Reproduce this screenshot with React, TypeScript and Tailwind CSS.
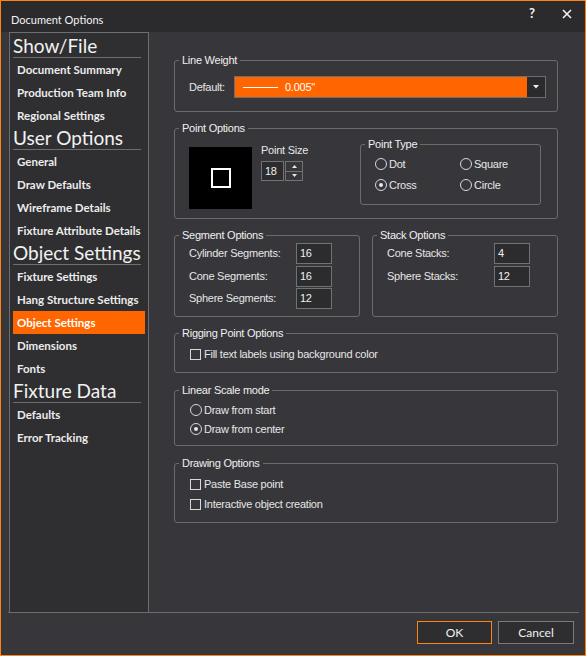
import React from 'react';

const sidebar: { header: string; items: string[] }[] = [
  { header: 'Show/File', items: ['Document Summary', 'Production Team Info', 'Regional Settings'] },
  { header: 'User Options', items: ['General', 'Draw Defaults', 'Wireframe Details', 'Fixture Attribute Details'] },
  { header: 'Object Settings', items: ['Fixture Settings', 'Hang Structure Settings', 'Object Settings', 'Dimensions', 'Fonts'] },
  { header: 'Fixture Data', items: ['Defaults', 'Error Tracking'] },
];

const SELECTED = 'Object Settings';

const Group: React.FC<{ title: string; className?: string; children?: React.ReactNode }> = ({ title, className, children }) => (
  <fieldset className={`border border-[#6b6b6b] rounded-[3px] ${className ?? ''}`}>
    <legend className="ml-[4px] px-[3px] leading-[14px] text-[#f0f0f0]">{title}</legend>
    {children}
  </fieldset>
);

const Radio: React.FC<{ label: string; checked?: boolean }> = ({ label, checked }) => (
  <div className="flex items-center h-[14px]">
    <span className="w-[12px] h-[12px] rounded-full border border-[#d8d8d8] flex items-center justify-center">
      {checked && <span className="w-[4px] h-[4px] rounded-full bg-[#e8e8e8]" />}
    </span>
    <span className="ml-[2px]">{label}</span>
  </div>
);

const Check: React.FC<{ label: string }> = ({ label }) => (
  <div className="flex items-center h-[14px]">
    <span className="w-[11px] h-[11px] border border-[#d8d8d8]" />
    <span className="ml-[3px]">{label}</span>
  </div>
);

const NumField: React.FC<{ label: string; value: string }> = ({ label, value }) => (
  <div className="flex items-center">
    <span className="w-[107px]">{label}</span>
    <div className="w-[36px] h-[21px] border border-[#727272] bg-[#2c2c2f] flex items-center pl-[3px] text-[#f0f0f0]">
      {value}
    </div>
  </div>
);

export default function App() {
  return (
    <div className="w-[586px] h-[656px] border border-[#ff8410] bg-[#37363b] flex flex-col overflow-hidden text-[11px] tracking-[-0.25px] text-[#e6e6e6] font-['Liberation_Sans',Arial,sans-serif]">
      {/* title bar */}
      <div className="h-[31px] shrink-0 bg-[#2b2b2e] flex items-start font-['Lato','Noto_Sans',sans-serif] tracking-normal">
        <span className="mt-[11px] ml-[10px] text-[11px] leading-[15px] text-[#f2f2f2]">Document Options</span>
        <div className="ml-auto mr-[13px] mt-[4px] flex items-center gap-[27px] text-[#f2f2f2]">
          <span className="text-[13px] font-bold leading-[16px]">?</span>
          <svg width="10" height="10" viewBox="0 0 10 10" className="mt-[1px]">
            <path d="M1 1 L9 9 M9 1 L1 9" stroke="#f2f2f2" strokeWidth="1.6" />
          </svg>
        </div>
      </div>

      {/* main area */}
      <div className="h-[581px] shrink-0 ml-[7px] mr-[6px] border-b border-[#6e6e6e] flex">
        <nav className="ml-[1px] w-[140px] border-l border-t border-r border-[#6e6e6e] bg-[#2f2f31] px-[3px] pt-[2px] font-['Lato','Noto_Sans',sans-serif] tracking-normal">
          {sidebar.map((sec) => (
            <div key={sec.header}>
              <div className="h-[23px] mr-[4px] border-b border-[#6e6e6e] flex items-end whitespace-nowrap text-[19px] leading-[22px] text-[#f2f2f2]">
                {sec.header}
              </div>
              {sec.items.map((item) => (
                <div
                  key={item}
                  className={`h-[23px] flex items-center pl-[4px] whitespace-nowrap text-[11.5px] font-bold ${
                    item === SELECTED ? 'bg-[#ff6600] text-white' : 'text-[#ececec]'
                  }`}
                >
                  {item}
                </div>
              ))}
            </div>
          ))}
        </nav>

        <div className="ml-[25px] w-[384px] pt-[21px] flex flex-col">
          <Group title="Line Weight" className="h-[59px]">
            <div className="flex items-center mt-[9px] pl-[14px]">
              <span className="w-[45px]">Default:</span>
              <div className="w-[312px] h-[22px] border border-[#6e6e6e] flex">
                <div className="flex-1 bg-[#ff6600] flex items-center pl-[8px] text-white">
                  <span className="w-[35px] h-px bg-white" />
                  <span className="ml-[7px]">0.005''</span>
                </div>
                <div className="w-[18px] bg-[#2b2b2e] flex items-center justify-center">
                  <svg width="6" height="4" viewBox="0 0 6 4">
                    <polygon points="0,0 6,0 3,3.5" fill="#f0f0f0" />
                  </svg>
                </div>
              </div>
            </div>
          </Group>

          <Group title="Point Options" className="h-[98px] mt-[9px]">
            <div className="flex items-start">
              <div className="ml-[14px] mt-[12px] w-[63px] h-[62px] bg-black flex items-center justify-center">
                <span className="w-[20px] h-[20px] border-2 border-white" />
              </div>
              <div className="ml-[9px] mt-[9px] flex flex-col">
                <span className="leading-[13px]">Point Size</span>
                <div className="mt-[4px] flex">
                  <div className="w-[23px] h-[20px] border border-[#727272] bg-[#2c2c2f] flex items-center pl-[3px] text-[#f0f0f0]">
                    18
                  </div>
                  <div className="ml-px w-[18px] h-[20px] border border-[#727272] flex flex-col">
                    <div className="flex-1 flex items-center justify-center border-b border-[#727272]">
                      <svg width="5" height="3" viewBox="0 0 5 3">
                        <polygon points="0,3 5,3 2.5,0" fill="#e8e8e8" />
                      </svg>
                    </div>
                    <div className="flex-1 flex items-center justify-center">
                      <svg width="5" height="3" viewBox="0 0 5 3">
                        <polygon points="0,0 5,0 2.5,3" fill="#e8e8e8" />
                      </svg>
                    </div>
                  </div>
                </div>
              </div>
              <Group title="Point Type" className="ml-auto mr-[16px] mt-[2px] w-[181px] h-[68px]">
                <div className="mt-[6px] pl-[14px] grid grid-cols-[85px_1fr] gap-y-[7px]">
                  <Radio label="Dot" />
                  <Radio label="Square" />
                  <Radio label="Cross" checked />
                  <Radio label="Circle" />
                </div>
              </Group>
            </div>
          </Group>

          <div className="mt-[9px] flex gap-[12px]">
            <Group title="Segment Options" className="w-[186px] h-[89px]">
              <div className="mt-[1px] pl-[14px] flex flex-col gap-[1.5px]">
                <NumField label="Cylinder Segments:" value="16" />
                <NumField label="Cone Segments:" value="16" />
                <NumField label="Sphere Segments:" value="12" />
              </div>
            </Group>
            <Group title="Stack Options" className="w-[186px] h-[89px]">
              <div className="mt-[1px] pl-[14px] flex flex-col gap-[1.5px]">
                <NumField label="Cone Stacks:" value="4" />
                <NumField label="Sphere Stacks:" value="12" />
              </div>
            </Group>
          </div>

          <Group title="Rigging Point Options" className="h-[47px] mt-[9px]">
            <div className="mt-[7px] pl-[15px]">
              <Check label="Fill text labels using background color" />
            </div>
          </Group>

          <Group title="Linear Scale mode" className="h-[63px] mt-[10px]">
            <div className="mt-[6px] pl-[15px] flex flex-col gap-[5px]">
              <Radio label="Draw from start" />
              <Radio label="Draw from center" checked />
            </div>
          </Group>

          <Group title="Drawing Options" className="h-[67px] mt-[10px]">
            <div className="mt-[7px] pl-[15px] flex flex-col gap-[6px]">
              <Check label="Paste Base point" />
              <Check label="Interactive object creation" />
            </div>
          </Group>
        </div>
      </div>

      {/* footer */}
      <div className="flex justify-end gap-[6px] pt-[8px] pr-[11px] font-['Lato','Noto_Sans',sans-serif] tracking-normal text-[12px]">
        <button className="w-[75px] h-[23px] border border-[#ff8410] bg-[#2e2e31] text-[#f0f0f0]">OK</button>
        <button className="w-[76px] h-[23px] border border-[#7a7a7a] bg-[#2e2e31] text-[#f0f0f0]">Cancel</button>
      </div>
    </div>
  );
}
